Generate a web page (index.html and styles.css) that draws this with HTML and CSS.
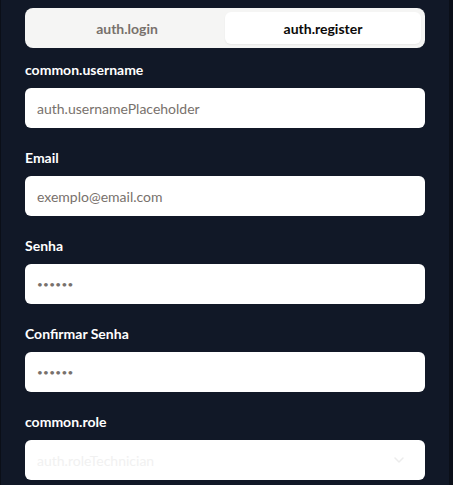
FILE: index.html
```html
<!DOCTYPE html>
<html lang="pt">
<head>
<meta charset="utf-8">
<title>Register</title>
<link rel="stylesheet" href="styles.css">
</head>
<body>
<div class="panel">
  <div class="tabs">
    <button class="tab">auth.login</button>
    <button class="tab tab-active">auth.register</button>
  </div>
  <form class="form">
    <div class="field">
      <label class="label">common.username</label>
      <input class="input" type="text" placeholder="auth.usernamePlaceholder">
    </div>
    <div class="field">
      <label class="label">Email</label>
      <input class="input" type="email" placeholder="exemplo@email.com">
    </div>
    <div class="field">
      <label class="label">Senha</label>
      <input class="input input-pass" type="password" value="123456">
    </div>
    <div class="field">
      <label class="label">Confirmar Senha</label>
      <input class="input input-pass" type="password" value="123456">
    </div>
    <div class="field">
      <label class="label">common.role</label>
      <div class="select">
        <span class="select-text">auth.roleTechnician</span>
        <svg class="chevron" width="16" height="16" viewBox="0 0 16 16"><path d="M4 6l4 4 4-4" fill="none" stroke="currentColor" stroke-width="1.5" stroke-linecap="round" stroke-linejoin="round"/></svg>
      </div>
    </div>
  </form>
</div>
</body>
</html>
```
FILE: styles.css
```css
* { box-sizing: border-box; }
html, body { margin: 0; padding: 0; }
body {
  background: #0b0f18;
  font-family: Lato, "Noto Sans", sans-serif;
  height: 485px;
  overflow: hidden;
}
.panel {
  margin-left: 1px;
  width: 448px;
  height: 485px;
  background: #111827;
  padding: 8px 24px 0 24px;
}
.tabs {
  display: grid;
  grid-template-columns: 1fr 1fr;
  height: 40px;
  padding: 4px;
  background: #f5f5f4;
  border-radius: 8px;
}
.tab {
  border: 0;
  background: transparent;
  font-family: inherit;
  font-size: 14px;
  font-weight: 700;
  color: #78716c;
  border-radius: 6px;
  padding: 0;
}
.tab-active {
  background: #ffffff;
  color: #0c0a09;
  box-shadow: 0 1px 2px rgba(0,0,0,0.06);
}
.form {
  margin-top: 12px;
  display: flex;
  flex-direction: column;
  gap: 20px;
}
.field { display: flex; flex-direction: column; }
.label {
  font-size: 14px;
  line-height: 20px;
  font-weight: 700;
  color: #ffffff;
  margin-bottom: 8px;
}
.input {
  height: 40px;
  border: 0;
  border-radius: 6px;
  background: #ffffff;
  padding: 0 12px;
  font-family: inherit;
  font-size: 14px;
  color: #78716c;
  outline: none;
}
.input::placeholder { color: #78716c; }
.input-pass { font-size: 10px; letter-spacing: 0.3px; }
.select {
  height: 40px;
  border-radius: 6px;
  background: #ffffff;
  padding: 0 12px;
  display: flex;
  align-items: center;
  justify-content: space-between;
  font-size: 14px;
}
.select-text { color: #f1f1f1; }
.chevron { color: #ececec; margin-right: 6px; }
```
